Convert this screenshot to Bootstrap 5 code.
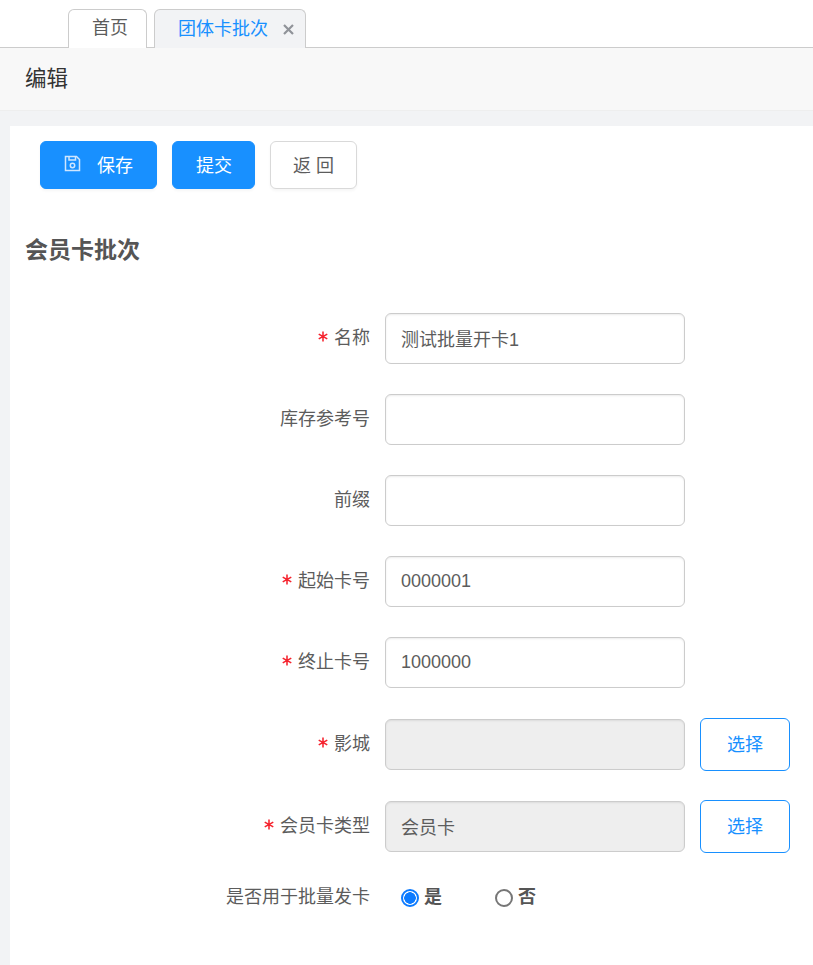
<!DOCTYPE html>
<html lang="zh-CN">
<head>
<meta charset="utf-8">
<title>编辑</title>
<link rel="stylesheet" href="https://cdn.jsdelivr.net/npm/bootstrap@5.3.0/dist/css/bootstrap.min.css">
<style>
html,body{height:965px;overflow:hidden}
body{font-family:"Liberation Sans","Noto Sans CJK SC",sans-serif;font-size:18px;color:#5c5c5c;background:#f2f3f5}
.tabbar{height:48px;background:#fff;border-bottom:1px solid #ccc;padding-left:68px;padding-top:9px;gap:7px}
.tabitem{height:39px;border:1px solid #ccc;border-bottom:0;border-radius:6px 6px 0 0;background:#fff;line-height:37px;color:#5c5c5c}
.tabhome{width:79px;padding-left:23px}
.tabcur{width:152px;padding-left:23px;background:#f2f3f5;color:#1890ff;margin-bottom:-1px;height:39px;display:flex;align-items:center}
.tabx{margin-left:15px;width:11px;height:11px;flex:none;margin-top:1px}
.titlebar{height:63px;background:#f8f8f8;border-bottom:1px solid #eee;padding-left:25px;font-size:21.5px;line-height:63px;color:#333}
.panelwrap{padding:15px 0 0 10px}
.panel{background:#fff;height:840px;padding-top:15px}
.actions{padding-left:30px;gap:15px}
.actbtn{height:48px;font-size:18px;border-radius:6px;padding:2px 0 0;box-shadow:0 2px 3px rgba(0,0,0,.04)}
.btnsave{width:117px;background:#1890ff;border:1px solid #1890ff;color:#fff}
.btnsub{width:83px;background:#1890ff;border:1px solid #1890ff;color:#fff;padding-left:1px}
.btnback{width:87px;background:#fff;border:1px solid #d9d9d9;color:#5c5c5c}
.btnsave:hover,.btnsub:hover{background:#1890ff;color:#fff}
.saveico{width:17px;height:17px;margin-right:16px;margin-left:0;vertical-align:0}
.sectitle{font-size:23px;font-weight:700;color:#555;margin:46px 0 0 15px;line-height:30px}
.formarea{margin-top:48px}
.frow{display:flex;align-items:center;height:51px;margin-bottom:30px}
.frow.tight{margin-bottom:31px}
.radiorow{margin-top:-10px}
.flabel{width:375px;text-align:right;padding-right:15px;flex:none;margin:0;color:#5c5c5c}
.star{display:inline-block;width:10px;height:11px;margin-right:6px;vertical-align:2px}
.finput{width:300px;height:51px;flex:none;font-size:18px;color:#5c5c5c;border:1px solid #ccc;border-radius:6px;padding:0 15px 1px;box-shadow:inset 0 1px 2px rgba(0,0,0,.08)}
.finput:disabled{background:#eee;color:#5c5c5c}
.pickbtn{width:90px;height:53px;flex:none;margin-left:15px;background:#fff;border:1px solid #1890ff;color:#1890ff;border-radius:6px;font-size:18px;padding:2px 0 0}
.radios{padding-left:16px;gap:0}
.radioitem{width:94px;font-weight:700;color:#555;margin:0;gap:5px}
.radioitem input{margin:0;width:18px;height:18px;flex:none}
.radioitem input:checked{background:radial-gradient(circle,#0d7bff 0 5.5px,#fff 6px);border:2px solid #0d7bff}
.radioitem input:not(:checked){border:2px solid #767676}
</style>
</head>
<body>
<div class="tabbar d-flex">
  <div class="tabitem tabhome">首页</div>
  <div class="tabitem tabcur">团体卡批次<svg class="tabx" viewBox="0 0 11 11" stroke="#909399" stroke-width="2.2"><path d="M1 1l9 9M10 1l-9 9"/></svg></div>
</div>
<div class="titlebar">编辑</div>
<div class="panelwrap">
  <div class="panel">
    <div class="actions d-flex">
      <button type="button" class="btn actbtn btnsave"><svg class="saveico" viewBox="0 0 17 17" fill="none" stroke="#cfe6ff" stroke-width="1.5"><path d="M1.5 1.5h11l3 3v11h-14z"/><path d="M5 1.5v3.5h6.5v-3.5"/><circle cx="8.5" cy="10.5" r="2.2"/></svg>保存</button>
      <button type="button" class="btn actbtn btnsub">提交</button>
      <button type="button" class="btn actbtn btnback">返 回</button>
    </div>
    <div class="sectitle">会员卡批次</div>
    <form class="formarea">
      <div class="frow"><label class="flabel"><svg class="star" viewBox="0 0 11 11" stroke="#f5222d" stroke-width="1.7"><path d="M5.5 0v11M0.8 2.8l9.4 5.4M10.2 2.8l-9.4 5.4"/></svg>名称</label><input class="form-control finput" value="测试批量开卡1"></div>
      <div class="frow"><label class="flabel">库存参考号</label><input class="form-control finput"></div>
      <div class="frow"><label class="flabel">前缀</label><input class="form-control finput"></div>
      <div class="frow"><label class="flabel"><svg class="star" viewBox="0 0 11 11" stroke="#f5222d" stroke-width="1.7"><path d="M5.5 0v11M0.8 2.8l9.4 5.4M10.2 2.8l-9.4 5.4"/></svg>起始卡号</label><input class="form-control finput" value="0000001"></div>
      <div class="frow tight"><label class="flabel"><svg class="star" viewBox="0 0 11 11" stroke="#f5222d" stroke-width="1.7"><path d="M5.5 0v11M0.8 2.8l9.4 5.4M10.2 2.8l-9.4 5.4"/></svg>终止卡号</label><input class="form-control finput" value="1000000"></div>
      <div class="frow tight"><label class="flabel"><svg class="star" viewBox="0 0 11 11" stroke="#f5222d" stroke-width="1.7"><path d="M5.5 0v11M0.8 2.8l9.4 5.4M10.2 2.8l-9.4 5.4"/></svg>影城</label><input class="form-control finput" disabled><button type="button" class="btn pickbtn">选择</button></div>
      <div class="frow"><label class="flabel"><svg class="star" viewBox="0 0 11 11" stroke="#f5222d" stroke-width="1.7"><path d="M5.5 0v11M0.8 2.8l9.4 5.4M10.2 2.8l-9.4 5.4"/></svg>会员卡类型</label><input class="form-control finput" disabled value="会员卡"><button type="button" class="btn pickbtn">选择</button></div>
      <div class="frow radiorow"><label class="flabel">是否用于批量发卡</label>
        <div class="radios d-flex">
          <label class="radioitem d-flex align-items-center"><input class="form-check-input" type="radio" name="batch" checked>是</label>
          <label class="radioitem d-flex align-items-center"><input class="form-check-input" type="radio" name="batch">否</label>
        </div>
      </div>
    </form>
  </div>
</div>
<script src="https://cdn.jsdelivr.net/npm/bootstrap@5.3.0/dist/js/bootstrap.bundle.min.js"></script>
</body>
</html>
